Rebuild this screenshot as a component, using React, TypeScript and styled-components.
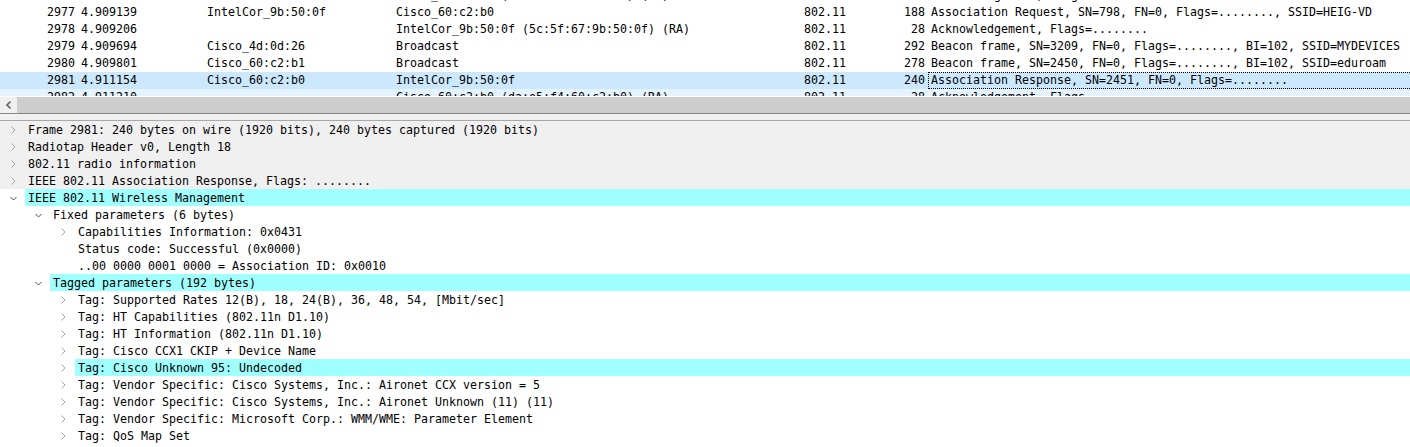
import React from "react";
import styled, { createGlobalStyle } from "styled-components";

const Global = createGlobalStyle`
  html, body { margin: 0; padding: 0; background: #ffffff; }
  body { font-family: "DejaVu Sans Mono", "Liberation Mono", monospace; }
`;

const Page = styled.div`
  width: 1410px;
  height: 447px;
  overflow: hidden;
  display: flex;
  flex-direction: column;
  background: #ffffff;
  font-family: "DejaVu Sans Mono", "Liberation Mono", monospace;
  font-size: 11.63px;
  color: #000000;
`;

const PacketViewport = styled.div`
  height: 96px;
  flex: none;
  overflow: hidden;
`;

const PacketList = styled.div`
  margin-top: -13px;
  display: flex;
  flex-direction: column;
`;

const PacketRow = styled.div<{ $state?: "selected" | "hover" }>`
  display: grid;
  grid-template-columns: 75px 126px 189px 408px 82px 45px 1fr;
  height: 17px;
  line-height: 17px;
  white-space: nowrap;
  background: ${(p) =>
    p.$state === "selected" ? "#cce8ff" : p.$state === "hover" ? "#e5f3ff" : "transparent"};
`;

const Cell = styled.div<{ $right?: boolean }>`
  overflow: hidden;
  text-align: ${(p) => (p.$right ? "right" : "left")};
  padding-left: ${(p) => (p.$right ? "0" : "6px")};
`;

const InfoCell = styled.div<{ $focus?: boolean }>`
  overflow: hidden;
  margin-left: 3px;
  padding-left: 2px;
  box-sizing: border-box;
  border: 1px dotted ${(p) => (p.$focus ? "#000000" : "transparent")};
  border-right: none;
  line-height: 15px;
`;

const HScroll = styled.div`
  height: 17px;
  flex: none;
  display: flex;
  box-sizing: border-box;
  border-top: 1px solid #ffffff;
  background: #f0f0f0;
`;

const ScrollButton = styled.div`
  width: 17px;
  display: flex;
  align-items: center;
  justify-content: center;
  background: #f0f0f0;
`;

const ScrollThumb = styled.div`
  flex: 1;
  background: #cdcdcd;
`;

const Splitter = styled.div`
  height: 8px;
  flex: none;
  box-sizing: border-box;
  border-top: 1px solid #868686;
  border-bottom: 1px solid #a8a8a8;
  background: #f0f0f0;
`;

const Tree = styled.div`
  display: flex;
  flex-direction: column;
`;

const TreeRow = styled.div<{ $level: number; $shaded?: boolean }>`
  display: flex;
  height: 17px;
  flex: none;
  padding-left: ${(p) => p.$level * 25}px;
  background: ${(p) => (p.$shaded ? "#f0f0f0" : "transparent")};
  white-space: nowrap;
`;

const Toggle = styled.div`
  width: 25px;
  flex: none;
  display: flex;
  align-items: center;
  justify-content: center;
`;

const Label = styled.div<{ $selected?: boolean }>`
  flex: 1;
  box-sizing: border-box;
  padding-left: 3px;
  padding-top: 1px;
  line-height: 17px;
  background: ${(p) => (p.$selected ? "#a0ffff" : "transparent")};
`;

const Chevron = ({ open }: { open?: boolean }) =>
  open ? (
    <svg width="12" height="17" viewBox="0 0 12 17">
      <path d="M3.5 8 L6.5 11 L9.5 8" fill="none" stroke="#505050" strokeWidth="1" />
    </svg>
  ) : (
    <svg width="12" height="17" viewBox="0 0 12 17">
      <path d="M4.5 5.5 L8 9 L4.5 12.5" fill="none" stroke="#a6a6a6" strokeWidth="1" />
    </svg>
  );

type Packet = {
  no: string;
  time: string;
  src: string;
  dst: string;
  proto: string;
  len: string;
  info: string;
  state?: "selected" | "hover";
};

const packets: Packet[] = [
  { no: "2976", time: "4.909074", src: "", dst: "Cisco_60:c2:b0 (da:e5:f4:60:c2:b0) (RA)", proto: "802.11", len: "28", info: "Acknowledgement, Flags=........" },
  { no: "2977", time: "4.909139", src: "IntelCor_9b:50:0f", dst: "Cisco_60:c2:b0", proto: "802.11", len: "188", info: "Association Request, SN=798, FN=0, Flags=........, SSID=HEIG-VD" },
  { no: "2978", time: "4.909206", src: "", dst: "IntelCor_9b:50:0f (5c:5f:67:9b:50:0f) (RA)", proto: "802.11", len: "28", info: "Acknowledgement, Flags=........" },
  { no: "2979", time: "4.909694", src: "Cisco_4d:0d:26", dst: "Broadcast", proto: "802.11", len: "292", info: "Beacon frame, SN=3209, FN=0, Flags=........, BI=102, SSID=MYDEVICES" },
  { no: "2980", time: "4.909801", src: "Cisco_60:c2:b1", dst: "Broadcast", proto: "802.11", len: "278", info: "Beacon frame, SN=2450, FN=0, Flags=........, BI=102, SSID=eduroam" },
  { no: "2981", time: "4.911154", src: "Cisco_60:c2:b0", dst: "IntelCor_9b:50:0f", proto: "802.11", len: "240", info: "Association Response, SN=2451, FN=0, Flags=........", state: "selected" },
  { no: "2982", time: "4.911210", src: "", dst: "Cisco_60:c2:b0 (da:e5:f4:60:c2:b0) (RA)", proto: "802.11", len: "28", info: "Acknowledgement, Flags=........", state: "hover" },
];

type Node = {
  level: number;
  text: string;
  toggle?: "open" | "closed";
  shaded?: boolean;
  selected?: boolean;
};

const nodes: Node[] = [
  { level: 0, text: "Frame 2981: 240 bytes on wire (1920 bits), 240 bytes captured (1920 bits)", toggle: "closed", shaded: true },
  { level: 0, text: "Radiotap Header v0, Length 18", toggle: "closed", shaded: true },
  { level: 0, text: "802.11 radio information", toggle: "closed", shaded: true },
  { level: 0, text: "IEEE 802.11 Association Response, Flags: ........", toggle: "closed", shaded: true },
  { level: 0, text: "IEEE 802.11 Wireless Management", toggle: "open", selected: true },
  { level: 1, text: "Fixed parameters (6 bytes)", toggle: "open" },
  { level: 2, text: "Capabilities Information: 0x0431", toggle: "closed" },
  { level: 2, text: "Status code: Successful (0x0000)" },
  { level: 2, text: "..00 0000 0001 0000 = Association ID: 0x0010" },
  { level: 1, text: "Tagged parameters (192 bytes)", toggle: "open", selected: true },
  { level: 2, text: "Tag: Supported Rates 12(B), 18, 24(B), 36, 48, 54, [Mbit/sec]", toggle: "closed" },
  { level: 2, text: "Tag: HT Capabilities (802.11n D1.10)", toggle: "closed" },
  { level: 2, text: "Tag: HT Information (802.11n D1.10)", toggle: "closed" },
  { level: 2, text: "Tag: Cisco CCX1 CKIP + Device Name", toggle: "closed" },
  { level: 2, text: "Tag: Cisco Unknown 95: Undecoded", toggle: "closed", selected: true },
  { level: 2, text: "Tag: Vendor Specific: Cisco Systems, Inc.: Aironet CCX version = 5", toggle: "closed" },
  { level: 2, text: "Tag: Vendor Specific: Cisco Systems, Inc.: Aironet Unknown (11) (11)", toggle: "closed" },
  { level: 2, text: "Tag: Vendor Specific: Microsoft Corp.: WMM/WME: Parameter Element", toggle: "closed" },
  { level: 2, text: "Tag: QoS Map Set", toggle: "closed" },
];

export default function App() {
  return (
    <>
      <Global />
      <Page>
        <PacketViewport>
          <PacketList>
            {packets.map((p) => (
              <PacketRow key={p.no} $state={p.state}>
                <Cell $right>{p.no}</Cell>
                <Cell>{p.time}</Cell>
                <Cell>{p.src}</Cell>
                <Cell>{p.dst}</Cell>
                <Cell>{p.proto}</Cell>
                <Cell $right>{p.len}</Cell>
                <InfoCell $focus={p.state === "selected"}>{p.info}</InfoCell>
              </PacketRow>
            ))}
          </PacketList>
        </PacketViewport>
        <HScroll>
          <ScrollButton>
            <svg width="8" height="10" viewBox="0 0 8 10">
              <path d="M5.5 1.5 L2 5 L5.5 8.5" fill="none" stroke="#606060" strokeWidth="1.6" />
            </svg>
          </ScrollButton>
          <ScrollThumb />
        </HScroll>
        <Splitter />
        <Tree>
          {nodes.map((n, i) => (
            <TreeRow key={i} $level={n.level} $shaded={n.shaded}>
              <Toggle>{n.toggle ? <Chevron open={n.toggle === "open"} /> : null}</Toggle>
              <Label $selected={n.selected}>{n.text}</Label>
            </TreeRow>
          ))}
        </Tree>
      </Page>
    </>
  );
}
